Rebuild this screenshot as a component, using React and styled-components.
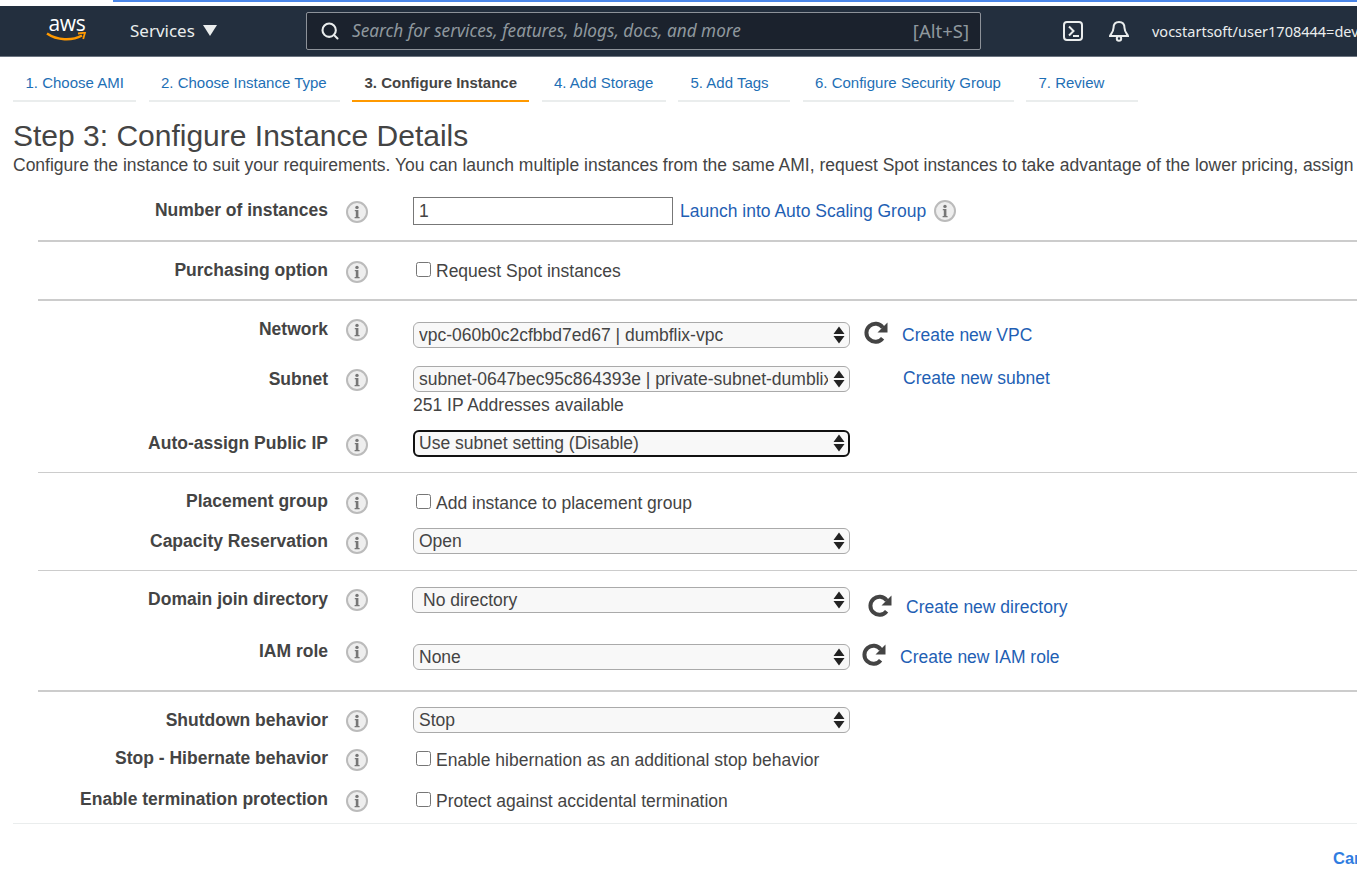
import React from 'react';
import styled, { createGlobalStyle } from 'styled-components';
import { Search } from 'lucide-react';

const Global = createGlobalStyle`
  html, body { margin: 0; padding: 0; background: #fff; overflow: hidden; }
  body { font-family: "Liberation Sans", Arial, sans-serif; color: #444; }
`;
const Page = styled.div`width: 1357px; height: 872px; overflow: hidden;`;
const TopStrip = styled.div`height: 6px; padding-left: 113px; background: #fff;`;
const BlueLine = styled.div`height: 2px; background: #4a86e8;`;
const NavBar = styled.header`
  height: 51px; padding-bottom: 1px; background: #232f3e; border-bottom: 1px solid #6b7480; display: flex; align-items: center;
  font-family: "Noto Sans", "Open Sans", sans-serif; color: #eaeded; white-space: nowrap; box-sizing: border-box;
`;
const Logo = styled.div`
  width: 42px; margin-left: 46px; height: 36px; display: flex; flex-direction: column; align-items: center;
`;
const LogoText = styled.span`
  font: 21px/20px "Open Sans", sans-serif; color: #fff; letter-spacing: -0.3px; height: 19px;
`;
const Services = styled.div`
  margin-left: 42px; width: 176px; display: flex; align-items: center; gap: 8px; font-size: 17px;
`;
const Caret = styled.span`
  width: 0; height: 0; border-left: 7px solid transparent; border-right: 7px solid transparent; border-top: 11px solid #eaeded;
`;
const SearchBox = styled.div`
  width: 675px; height: 38px; box-sizing: border-box; background: #1b222d; border: 1px solid #8d9299; border-radius: 2px;
  display: flex; align-items: center; padding: 0 11px 0 13px; gap: 12px;
`;
const SearchText = styled.span`
  flex: 1; font-style: italic; font-size: 17.2px; color: #8f989e;
`;
const Shortcut = styled.span`font-size: 18.5px; color: #8f989e;`;
const NavIcons = styled.div`
  margin-left: 81px; display: flex; align-items: center; gap: 23px; flex: 1; min-width: 0;
  svg { flex: none; }
`;
const UserName = styled.span`font-size: 14.5px; margin-left: -2px; color: #eaeded;`;

const Tabs = styled.nav`display: flex; gap: 12.5px; padding: 10px 0 0 13px; height: 34px;`;
const Tab = styled.a`
  box-sizing: border-box; width: ${p => p.$w}px; height: 35px; padding: 6px 0 0 12.5px; font-size: 15px; line-height: 20px; white-space: nowrap;
  color: ${p => (p.$active ? '#444' : '#1e6fb5')}; font-weight: ${p => (p.$active ? 700 : 400)};
  border-bottom: 2px solid ${p => (p.$active ? '#f90' : '#eaeded')};
`;
const Title = styled.h1`
  margin: 18px 0 0 13px; font-size: 30px; line-height: 34px; font-weight: 400; color: #444;
`;
const Description = styled.p`
  margin: 0 0 0 13px; font-size: 17.5px; line-height: 24px; color: #444; white-space: nowrap;
`;
const Form = styled.div`margin: 4px 0 0 38px;`;
const Section = styled.section`
  border-bottom: ${p => (p.$rule || 0)}px solid #ccc;
`;
const Row = styled.div`
  display: grid; grid-template-columns: 290px 22px 1fr; column-gap: 18px; height: ${p => p.$h}px; align-items: start;
`;
const Label = styled.div`
  padding-top: ${p => p.$top || 0}px; text-align: right; font-weight: 700; font-size: 17.5px; line-height: 20px; color: #444; white-space: nowrap;
`;
const InfoWrap = styled.div`padding-top: ${p => p.$top || 0}px; height: 22px;`;
const Control = styled.div`
  padding-top: ${p => p.$top || 0}px; margin-left: ${p => 27 + (p.$dx || 0)}px; display: flex; align-items: center; min-width: 0;
`;
const NumberInput = styled.input`
  box-sizing: border-box; width: 260px; height: 28px; border: 1px solid #777; padding: 0 5px; font: 17.5px "Liberation Sans", sans-serif; color: #444; outline: none;
`;
const LinkText = styled.a`
  color: #1f5fb4; font-size: 17.5px; line-height: 20px; white-space: nowrap;
  margin-left: ${p => p.$ml || 0}px; padding-top: ${p => p.$top || 0}px; padding-bottom: ${p => p.$bottom || 0}px;
`;
const CheckLine = styled.label`
  display: flex; align-items: center; gap: 5px; font-size: 17.5px; line-height: 20px; color: #444; white-space: nowrap;
`;
const Check = styled.input`
  width: 15px; height: 15px; margin: -4px 0 0 3px;
`;
const SelectBox = styled.div`
  position: relative; width: ${p => p.$w || 437}px; height: ${p => (p.$focus ? 27 : 26)}px; flex: none;
`;
const NativeSelect = styled.select`
  appearance: none; width: 100%; height: 100%; box-sizing: border-box; background: #f8f8f8; margin: 0;
  border: ${p => (p.$focus ? '2px solid #111' : '1px solid #aaa')}; border-radius: 6px;
  padding: 0 21px ${p => (p.$focus ? 1 : 0)}px ${p => (p.$focus ? 4 : p.$pl || 5)}px;
  font: 17.5px "Liberation Sans", sans-serif; color: #444; outline: none;
`;
const Arrows = styled.svg`
  position: absolute; right: 4px; top: 4px; width: 14px; height: 18px; pointer-events: none;
`;
const Under = styled.div`font-size: 17.5px; line-height: 20px; color: #444; margin-left: 27px; margin-top: 3px;`;
const Stack = styled.div`display: flex; flex-direction: column;`;
const RefreshIcon = styled.svg`
  flex: none; width: 24px; height: 24px; margin-left: ${p => p.$ml}px;
  margin-top: ${p => p.$mt || 0}px; margin-bottom: ${p => p.$mb || 0}px;
`;
const SelectOffset = styled.div`margin-bottom: 4px; flex: none;`;
const InfoInline = styled.span`margin-left: 8px; display: inline-flex;`;
const BottomRule = styled.div`margin: 4px 0 0 13px; border-top: 1px solid #eaeded;`;
const Cancel = styled.div`
  margin: 24px 0 0 1333px; color: #2f7de1; font-weight: 700; font-size: 16.5px; line-height: 20px; white-space: nowrap;
`;

const Info = () => (
  <svg width="22" height="22" viewBox="0 0 22 22">
    <circle cx="11" cy="11" r="10" fill="#eee" stroke="#bbb" strokeWidth="2" />
    <circle cx="11" cy="6.4" r="1.7" fill="#777" />
    <path d="M8.8 9h3.6v7h1.2v1.3H8.6V16h1.2v-5.7h-1z" fill="#777" />
  </svg>
);

const Refresh = ({ ml, mt, mb }) => (
  <RefreshIcon $ml={ml} $mt={mt} $mb={mb} viewBox="0 0 24 24">
    <path d="M18.6 17.2a9 9 0 1 1 .2-10.600" fill="none" stroke="#444" strokeWidth="4" />
    <path d="M23.500 1.500V11.500H13.500z" fill="#444" />
  </RefreshIcon>
);

const Select = ({ value, w, pl, focus }) => (
  <SelectBox $w={w} $focus={focus}>
    <NativeSelect $focus={focus} $pl={pl} defaultValue={value}><option>{value}</option></NativeSelect>
    <Arrows viewBox="0 0 14 18">
      <path d="M7 .5l5.500 7.500H1.500z M7 17.500l5.500-7.500H1.500z" fill="#222" />
    </Arrows>
  </SelectBox>
);

const tabs = [
  ['1. Choose AMI', 123],
  ['2. Choose Instance Type', 191],
  ['3. Configure Instance', 177],
  ['4. Add Storage', 124],
  ['5. Add Tags', 112],
  ['6. Configure Security Group', 211],
  ['7. Review', 112],
];

export default function App() {
  return (
    <Page>
      <Global />
      <TopStrip><BlueLine /></TopStrip>
      <NavBar>
        <Logo>
          <LogoText>aws</LogoText>
          <svg width="42" height="11" viewBox="0 0 42 11">
            <path d="M1 1.500C11 8.500 26 9 36 3.500" fill="none" stroke="#f90" strokeWidth="2.400" />
            <path d="M32 1.500l7-.8-1.800 6.300" fill="none" stroke="#f90" strokeWidth="1.800" />
          </svg>
        </Logo>
        <Services>Services <Caret /></Services>
        <SearchBox>
          <Search size={20} color="#eaeded" strokeWidth={2.5} />
          <SearchText>Search for services, features, blogs, docs, and more</SearchText>
          <Shortcut>[Alt+S]</Shortcut>
        </SearchBox>
        <NavIcons>
          <svg width="22" height="22" viewBox="0 0 22 22" fill="none" stroke="#eaeded" strokeWidth="2">
            <rect x="2" y="2" width="18" height="18" rx="3" />
            <path d="M7 6.500l4.500 4.500L7 15.500M11 16h6" />
          </svg>
          <svg width="24" height="24" viewBox="0 0 24 24" fill="none" stroke="#eaeded" strokeWidth="2">
            <path d="M12 3c-4 0-5.500 3-5.500 6 0 4-3.500 7-3.500 8h18c0-1-3.500-4-3.500-8 0-3-1.500-6-5.500-6z" />
            <circle cx="12" cy="19.500" r="2.200" />
          </svg>
          <UserName>vocstartsoft/user1708444=dev-user @ 1234-5678-9012</UserName>
        </NavIcons>
      </NavBar>
      <Tabs>
        {tabs.map(([t, w], i) => <Tab key={t} $w={w} $active={i === 2}>{t}</Tab>)}
      </Tabs>
      <Title>Step 3: Configure Instance Details</Title>
      <Description>Configure the instance to suit your requirements. You can launch multiple instances from the same AMI, request Spot instances to take advantage of the lower pricing, assign an access management role to the instance, and more.</Description>
      <Form>
        <Section $rule={2}>
          <Row $h={59}>
            <Label $top={19}>Number of instances</Label>
            <InfoWrap $top={20}><Info /></InfoWrap>
            <Control $top={16}>
              <NumberInput defaultValue="1" />
              <LinkText $ml={7}>Launch into Auto Scaling Group</LinkText>
              <InfoInline><Info /></InfoInline>
            </Control>
          </Row>
        </Section>
        <Section $rule={2}>
          <Row $h={57}>
            <Label $top={18}>Purchasing option</Label>
            <InfoWrap $top={19}><Info /></InfoWrap>
            <Control $top={19}>
              <CheckLine><Check type="checkbox" />Request Spot instances</CheckLine>
            </Control>
          </Row>
        </Section>
        <Section $rule={1}>
          <Row $h={54}>
            <Label $top={18}>Network</Label>
            <InfoWrap $top={18}><Info /></InfoWrap>
            <Control $top={20}>
              <Select value="vpc-060b0c2cfbbd7ed67 | dumbflix-vpc" />
              <Refresh ml={14} mb={4} />
              <LinkText $ml={14}>Create new VPC</LinkText>
            </Control>
          </Row>
          <Row $h={64}>
            <Label $top={14}>Subnet</Label>
            <InfoWrap $top={14}><Info /></InfoWrap>
            <Stack>
              <Control $top={11}>
                <Select value="subnet-0647bec95c864393e | private-subnet-dumblix" />
                <LinkText $ml={53} $bottom={2}>Create new subnet</LinkText>
              </Control>
              <Under>251 IP Addresses available</Under>
            </Stack>
          </Row>
          <Row $h={53}>
            <Label $top={14}>Auto-assign Public IP</Label>
            <InfoWrap $top={15}><Info /></InfoWrap>
            <Control $top={11}>
              <Select value="Use subnet setting (Disable)" focus />
            </Control>
          </Row>
        </Section>
        <Section $rule={1}>
          <Row $h={50}>
            <Label $top={18}>Placement group</Label>
            <InfoWrap $top={19}><Info /></InfoWrap>
            <Control $top={20}>
              <CheckLine><Check type="checkbox" />Add instance to placement group</CheckLine>
            </Control>
          </Row>
          <Row $h={47}>
            <Label $top={8}>Capacity Reservation</Label>
            <InfoWrap $top={9}><Info /></InfoWrap>
            <Control $top={5}>
              <Select value="Open" />
            </Control>
          </Row>
        </Section>
        <Section $rule={2}>
          <Row $h={58}>
            <Label $top={18}>Domain join directory</Label>
            <InfoWrap $top={18}><Info /></InfoWrap>
            <Control $top={15} $dx={-1}>
              <SelectOffset><Select value="No directory" pl={10} w={438} /></SelectOffset>
              <Refresh ml={18} mt={8} />
              <LinkText $ml={14} $top={10}>Create new directory</LinkText>
            </Control>
          </Row>
          <Row $h={61}>
            <Label $top={12}>IAM role</Label>
            <InfoWrap $top={12}><Info /></InfoWrap>
            <Control $top={14}>
              <Select value="None" />
              <Refresh ml={12} mb={4} />
              <LinkText $ml={14}>Create new IAM role</LinkText>
            </Control>
          </Row>
        </Section>
        <Section>
          <Row $h={50}>
            <Label $top={18}>Shutdown behavior</Label>
            <InfoWrap $top={18}><Info /></InfoWrap>
            <Control $top={15}>
              <Select value="Stop" />
            </Control>
          </Row>
          <Row $h={42}>
            <Label $top={6}>Stop - Hibernate behavior</Label>
            <InfoWrap $top={7}><Info /></InfoWrap>
            <Control $top={8}>
              <CheckLine><Check type="checkbox" />Enable hibernation as an additional stop behavior</CheckLine>
            </Control>
          </Row>
          <Row $h={35}>
            <Label $top={5}>Enable termination protection</Label>
            <InfoWrap $top={6}><Info /></InfoWrap>
            <Control $top={7}>
              <CheckLine><Check type="checkbox" />Protect against accidental termination</CheckLine>
            </Control>
          </Row>
        </Section>
      </Form>
      <BottomRule />
      <Cancel>Cancel</Cancel>
    </Page>
  );
}
